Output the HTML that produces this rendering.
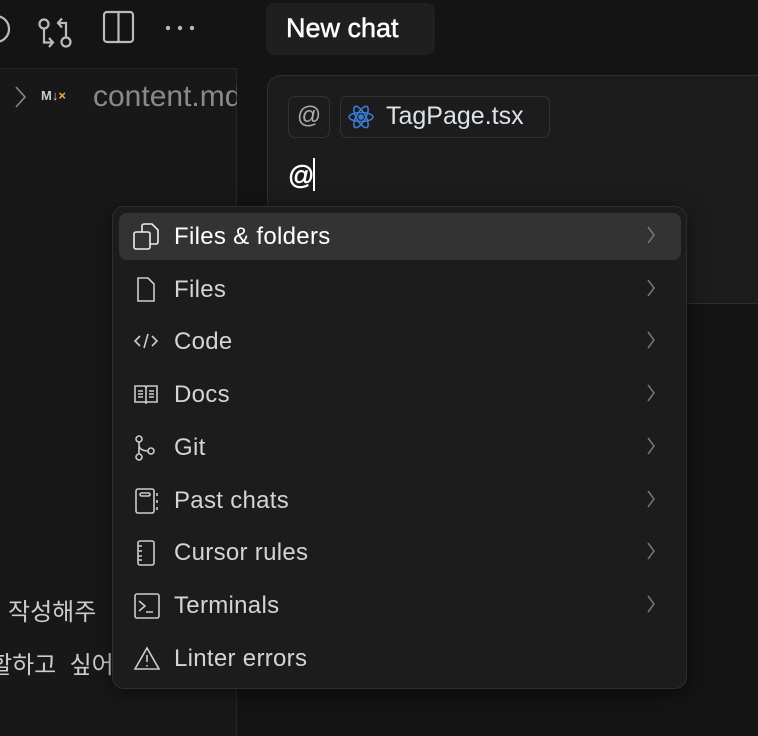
<!DOCTYPE html>
<html><head><meta charset="utf-8"><style>
*{margin:0;padding:0;box-sizing:border-box}
body{width:758px;height:736px;overflow:hidden;background:#141414;font-family:"Liberation Sans","Noto Sans CJK KR",sans-serif;position:relative}
.abs{position:absolute}
.left{left:0;top:0;width:237px;height:736px;background:#181818;border-right:1px solid #262626}
.lt{left:0;top:0;width:237px;height:69px;background:#141414;border-bottom:1px solid #262626}
.item{position:absolute;left:6px;width:562px;height:47px;border-radius:8px;color:#d4d4d4;font-size:24px;letter-spacing:0.3px}
.item span.t{position:absolute;left:55px;top:10px}
.item svg.ic{position:absolute;left:14px;top:10px}
</style></head><body>
<div class="abs left"></div>
<div class="abs lt"></div>
<svg class="abs" style="left:0;top:8px" width="220" height="44" viewBox="0 0 220 44" fill="none" stroke="#bbb" stroke-width="2.2">
<circle cx="-4" cy="21" r="13"/>
<circle cx="44" cy="16" r="4.5"/><path d="M44 20.5v14h8M49 30l4 4.5-4 4.5"/>
<circle cx="66" cy="34" r="4.5"/><path d="M66 29.5V15h-8M62 10.5l-4 4.5 4 4.5"/>
<rect x="104" y="4" width="29" height="30" rx="3"/><path d="M118.5 4v30"/>
<g fill="#bbb" stroke="none"><circle cx="168" cy="20" r="2.2"/><circle cx="180" cy="20" r="2.2"/><circle cx="192" cy="20" r="2.2"/></g>
</svg>
<svg class="abs" style="left:0;top:84px" width="90" height="26" fill="none" stroke="#888" stroke-width="1.6"><path d="M16 3l9 10-9 10"/></svg>
<div class="abs" style="left:41px;top:88px;font-size:13px;color:#ccc;font-weight:bold">M↓<span style="color:#e8b33a">×</span></div>
<div class="abs" style="left:93px;top:80px;font-size:30px;color:#8a8a8a;white-space:nowrap;width:144px;overflow:hidden">content.md</div>
<div class="abs" style="left:8px;top:592px;font-size:24px;color:#ccc">작성해주</div>
<div class="abs" style="left:-10px;top:645px;font-size:24px;color:#ccc">할하고 &nbsp;싶어</div>

<div class="abs" style="left:266px;top:3px;width:169px;height:52px;background:#1f1f1f;border-radius:8px;color:#fff;font-size:27px;padding:10px 0 0 20px;-webkit-text-stroke:0.5px #fff">New chat</div>
<div class="abs" style="left:267px;top:75px;width:520px;height:229px;background:#1c1c1c;border:1px solid #2e2e2e;border-radius:14px"></div>
<div class="abs" style="left:288px;top:96px;width:42px;height:42px;border:1.5px solid #333;border-radius:7px;color:#aaa;font-size:24px;text-align:center;line-height:38px">@</div>
<div class="abs" style="left:340px;top:96px;width:210px;height:42px;border:1.5px solid #333;border-radius:7px;color:#dde3ea;font-size:25px;padding:5px 0 0 45px">TagPage.tsx</div>
<svg class="abs" style="left:346px;top:103px" width="30" height="28" viewBox="-15 -14 30 28" fill="none" stroke="#3a7bd5" stroke-width="1.6"><ellipse rx="12" ry="4.5"/><ellipse rx="12" ry="4.5" transform="rotate(60)"/><ellipse rx="12" ry="4.5" transform="rotate(120)"/><circle r="2" fill="#3a7bd5"/></svg>
<div class="abs" style="left:288px;top:160px;font-size:26px;color:#fff;-webkit-text-stroke:0.5px #fff">@</div>
<div class="abs" style="top:158px;width:2px;height:33px;background:#fff;left:313px"></div>

<div class="abs" style="left:112px;top:206px;width:575px;height:483px;background:#1c1c1c;border:1.5px solid #2e2e2e;border-radius:12px;box-shadow:0 4px 20px rgba(0,0,0,.5)">
<div class="item" style="top:6px;background:#333;color:#fff"><svg class="ic" width="28" height="28" fill="none" stroke="#eee" stroke-width="1.6"><rect x="1" y="9" width="16" height="17" rx="2"/><path d="M9 9V3a2 2 0 012-2h8l6 6v12a2 2 0 01-2 2h-6"/></svg><span class="t">Files &amp; folders</span></div>
<div class="item" style="top:59px"><svg class="ic" width="28" height="28" fill="none" stroke="#ccc" stroke-width="1.6"><path d="M5 2h10l6 6v17H5z"/></svg><span class="t">Files</span></div>
<div class="item" style="top:111px"><svg class="ic" width="28" height="28" fill="none" stroke="#ccc" stroke-width="1.6"><path d="M7 8l-5 5 5 5M19 8l5 5-5 5M15 6l-4 14"/></svg><span class="t">Code</span></div>
<div class="item" style="top:164px"><svg class="ic" width="28" height="28" fill="none" stroke="#ccc" stroke-width="1.6"><path d="M2 5h10l1 2 1-2h10v16H14l-1 1-1-1H2zM13 7v14M5 10h5M5 13h5M5 16h5M16 10h5M16 13h5M16 16h5"/></svg><span class="t">Docs</span></div>
<div class="item" style="top:217px"><svg class="ic" width="28" height="28" fill="none" stroke="#ccc" stroke-width="1.6"><circle cx="6" cy="5" r="3"/><circle cx="6" cy="23" r="3"/><circle cx="18" cy="17" r="3"/><path d="M6 8v12M6 11c0 5 6 6 9 6"/></svg><span class="t">Git</span></div>
<div class="item" style="top:270px"><svg class="ic" width="28" height="28" fill="none" stroke="#ccc" stroke-width="1.6"><rect x="3" y="2" width="18" height="24" rx="2"/><rect x="7" y="6" width="10" height="3" rx="1.5"/><path d="M24 6v3M24 13v3M24 20v3"/></svg><span class="t">Past chats</span></div>
<div class="item" style="top:322px"><svg class="ic" width="28" height="28" fill="none" stroke="#ccc" stroke-width="1.6"><rect x="5" y="2" width="16" height="24" rx="2"/><path d="M5 7h4M5 12h4M5 17h4M5 21h4"/></svg><span class="t">Cursor rules</span></div>
<div class="item" style="top:375px"><svg class="ic" width="28" height="28" fill="none" stroke="#ccc" stroke-width="1.6"><rect x="2" y="2" width="24" height="24" rx="2"/><path d="M6 9l6 5-6 5M13 20h7"/></svg><span class="t">Terminals</span></div>
<div class="item" style="top:428px"><svg class="ic" width="28" height="28" fill="none" stroke="#ccc" stroke-width="1.6"><path d="M14 3L2 24h24z M14 10v7M14 20v1.5"/></svg><span class="t">Linter errors</span></div>
</div>
<svg class="abs" style="left:640px;top:220px" width="30" height="400" fill="none" stroke="#777" stroke-width="1.5">
<path d="M8 7l6 8-6 8M8 60l6 8-6 8M8 112l6 8-6 8M8 165l6 8-6 8M8 218l6 8-6 8M8 271l6 8-6 8M8 323l6 8-6 8M8 376l6 8-6 8"/></svg>
</body></html>
